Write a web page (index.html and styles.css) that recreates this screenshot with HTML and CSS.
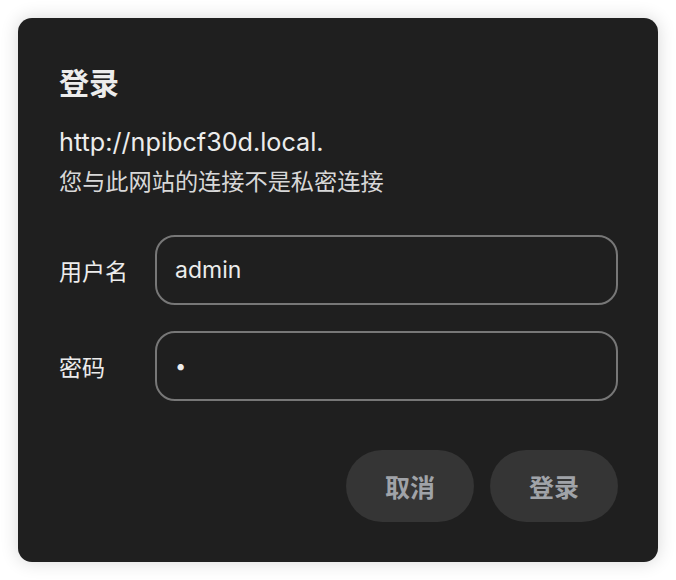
FILE: index.html
```html
<!DOCTYPE html>
<html lang="zh-CN">
<head>
<meta charset="utf-8">
<title>登录</title>
<link rel="stylesheet" href="styles.css">
</head>
<body>
<div class="dialog">
  <h1 class="title">登录</h1>
  <p class="url">http://npibcf30d.local.</p>
  <p class="note">您与此网站的连接不是私密连接</p>
  <div class="form">
    <label class="label">用户名</label>
    <div class="field">admin</div>
    <label class="label">密码</label>
    <div class="field pw">•</div>
  </div>
  <div class="actions">
    <button class="btn">取消</button>
    <button class="btn">登录</button>
  </div>
</div>
</body>
</html>
```
FILE: styles.css
```css
html, body {
  margin: 0;
  padding: 0;
  background: #ffffff;
}
body {
  padding: 18px;
  font-family: Inter, "Noto Sans CJK SC", sans-serif;
}
.dialog {
  width: 640px;
  height: 544px;
  box-sizing: border-box;
  background: #1f1f1f;
  border-radius: 14px;
  box-shadow: 0 0 18px rgba(0, 0, 0, 0.16);
  padding: 47px 40px 40px 41px;
  color: #ececec;
}
.title {
  margin: 0;
  font-size: 30px;
  line-height: 36px;
  font-weight: 700;
  color: #ececec;
}
.url {
  margin: 25px 0 0;
  font-size: 25.2px;
  line-height: 32px;
  color: #ececec;
}
.note {
  margin: 8px 0 0;
  font-size: 23.2px;
  line-height: 32px;
  color: #d8d8d8;
}
.form {
  margin-top: 37px;
  display: grid;
  grid-template-columns: 96px 1fr;
  row-gap: 26px;
  align-items: center;
}
.label {
  font-size: 23px;
  color: #ececec;
}
.field {
  height: 70px;
  box-sizing: border-box;
  border: 2px solid #777777;
  border-radius: 20px;
  padding: 0 18px;
  display: flex;
  align-items: center;
  font-size: 23px;
  color: #ececec;
}
.pw {
  font-size: 20px;
}
.actions {
  margin-top: 49px;
  display: flex;
  justify-content: flex-end;
  gap: 16px;
}
.btn {
  width: 128px;
  height: 72px;
  border: none;
  border-radius: 36px;
  background: #353535;
  color: #a0a3a8;
  font-family: Inter, "Noto Sans CJK SC", sans-serif;
  font-size: 25px;
  font-weight: 700;
  padding: 0;
}
```
